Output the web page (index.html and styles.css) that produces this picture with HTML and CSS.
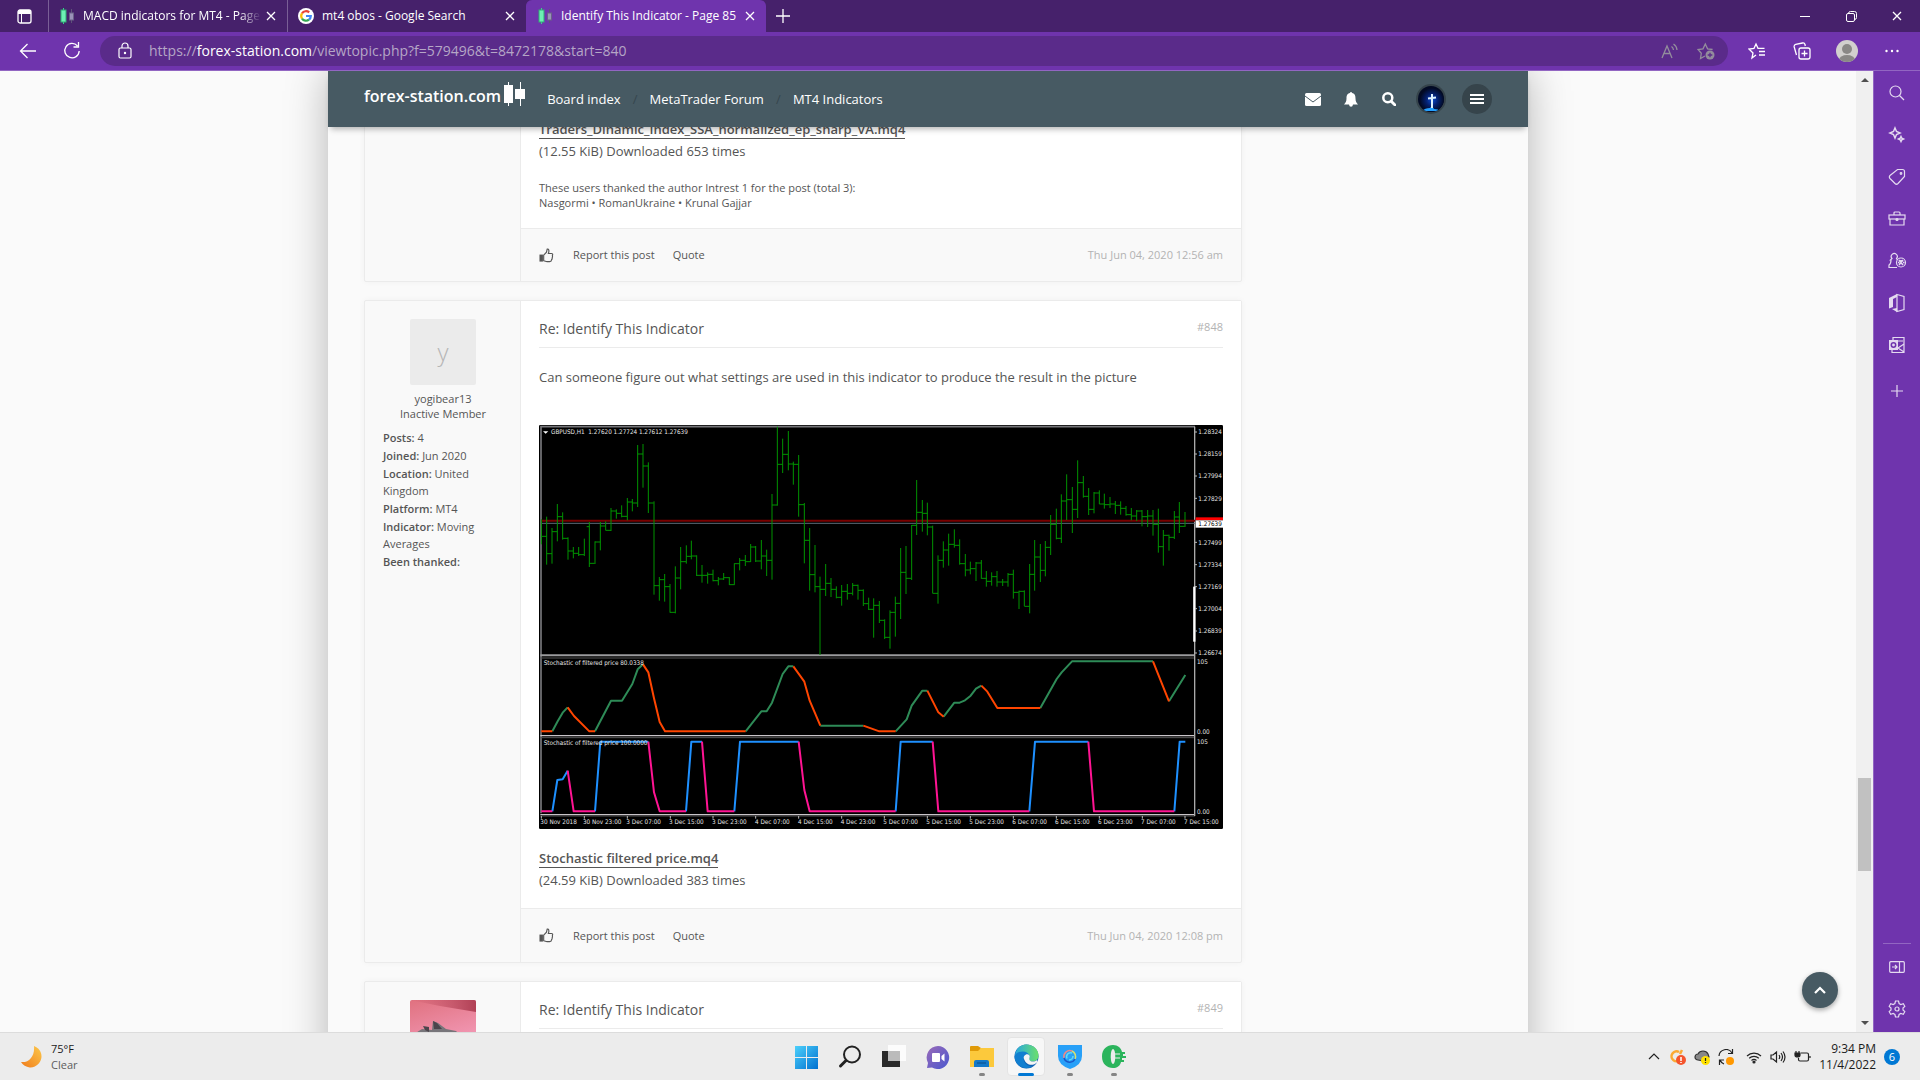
FILE: index.html
```html
<!DOCTYPE html>
<html lang="en">
<head>
<meta charset="utf-8">
<title>Identify This Indicator - Page 85</title>
<link rel="stylesheet" href="styles.css">
</head>
<body>
<svg class="defs" aria-hidden="true">
  <defs>
    <symbol id="candles" viewBox="0 0 16 16">
      <path d="M4.500 0v16" stroke="#39d98a"/><rect x="2" y="2" width="5" height="12" fill="#6df0b4" stroke="#2fae74"/>
      <path d="M12.500 1v14" stroke="#5d5478"/><rect x="10.500" y="5" width="4" height="7" fill="#9a92b8" stroke="#6a6088"/>
    </symbol>
    <symbol id="x" viewBox="0 0 10 10"><path d="M1 1l8 8M9 1l-8 8"/></symbol>
    <symbol id="thumb" viewBox="0 0 16 16">
      <path d="M5 7.500L8 4.500 8.700 1.200c1.600-.5 2.500 1.300 1.300 4.600h3.200c1.300 0 1.700 1 1.200 2l-.2.600c.4.900.3 1.500-.2 2.100.2.900 0 1.500-.6 2 0 1.300-.6 2-2 2H8.500c-1.200 0-2-.8-3.500-.9z" fill="none" stroke="currentColor" stroke-width="1.200"/>
      <path d="M.5 7h3.700v7.500H.5z" fill="currentColor"/>
    </symbol>
  </defs>
</svg>

<header class="tabbar">
  <button class="tab-menu" aria-label="Tab actions"><svg width="15" height="15" viewBox="0 0 15 15"><rect x="1" y="1" width="13" height="13" rx="2" fill="none" stroke="#fff" stroke-width="1.300"/><path d="M1 3a2 2 0 0 1 2-2h9a2 2 0 0 1 2 2v2H1z" fill="#fff"/><path d="M4.500 5v9" stroke="#fff"/></svg></button>
  <div class="tab"><svg class="fav" width="16" height="16"><use href="#candles"/></svg><span class="tab-title fade">MACD indicators for MT4 - Page</span><button class="tab-x" aria-label="Close tab"><svg width="10" height="10"><use href="#x"/></svg></button></div>
  <div class="tab"><svg class="fav" width="16" height="16" viewBox="0 0 16 16"><circle cx="8" cy="8" r="8" fill="#fff"/><g fill="none" stroke-width="2.200"><path d="M11.200 4.400A4.800 4.800 0 0 0 4 5.400" stroke="#ea4335"/><path d="M4 5.400a4.800 4.800 0 0 0 0 5.200" stroke="#fbbc05"/><path d="M4 10.600a4.800 4.800 0 0 0 7 1.100" stroke="#34a853"/><path d="M11 11.700A4.800 4.800 0 0 0 12.800 8H8" stroke="#4285f4"/></g></svg><span class="tab-title">mt4 obos - Google Search</span><button class="tab-x" aria-label="Close tab"><svg width="10" height="10"><use href="#x"/></svg></button></div>
  <div class="tab active"><svg class="fav" width="16" height="16"><use href="#candles"/></svg><span class="tab-title">Identify This Indicator - Page 85</span><button class="tab-x" aria-label="Close tab"><svg width="10" height="10"><use href="#x"/></svg></button></div>
  <button class="new-tab" aria-label="New tab"><svg width="14" height="14" viewBox="0 0 14 14"><path d="M7 0v14M0 7h14" stroke="#fff" stroke-width="1.300"/></svg></button>
  <div class="win">
    <button aria-label="Minimize"><svg width="10" height="10"><path d="M0 5.500h10" stroke="#fff"/></svg></button>
    <button aria-label="Restore"><svg width="11" height="11" viewBox="0 0 11 11" fill="none" stroke="#fff"><rect x=".5" y="2.500" width="8" height="8" rx="1.500"/><path d="M2.500 2.500q0-2 2-2h4q2 0 2 2v4q0 2-2 2"/></svg></button>
    <button aria-label="Close"><svg width="10" height="10" class="cl"><use href="#x"/></svg></button>
  </div>
</header>

<nav class="toolbar">
  <button class="nav-btn" aria-label="Back"><svg width="18" height="16" viewBox="0 0 18 16"><path d="M17 8H1.500M8.500 1L1.500 8l7 7"/></svg></button>
  <button class="nav-btn" aria-label="Refresh"><svg width="18" height="18" viewBox="0 0 18 18"><path d="M14.500 4A7.200 7.200 0 1 0 16.200 9M15.500 0v5h-5"/></svg></button>
  <div class="address">
    <svg width="14" height="18" viewBox="0 0 14 18" fill="none" stroke="#fff" stroke-width="1.200"><rect x="1" y="6" width="12" height="10" rx="1.500"/><path d="M4 6V4a3 3 0 0 1 6 0v2"/><circle cx="7" cy="11" r=".6" fill="#fff"/></svg>
    <div class="url" role="textbox" aria-label="Address" contenteditable="true" spellcheck="false">https://<b>forex-station.com</b>/viewtopic.php?f=579496&amp;t=8472178&amp;start=840</div>
    <button class="addr-btn" aria-label="Read aloud"><svg width="18" height="16" viewBox="0 0 18 16"><path d="M1 15L6 3l5 12M3 10.500h6M10.500 3.500a5 5 0 0 1 2 3.500M12.500 1a8 8 0 0 1 3.500 6"/></svg></button>
    <button class="addr-btn" aria-label="Add to favorites"><svg width="18" height="18" viewBox="0 0 18 18"><path d="M8 14l-4.500 2.500.8-5.200L1 7.500l5-.7L8.300 2l2.300 4.800 5 .7"/><circle cx="13" cy="13" r="4.500" fill="#938d9c" stroke="none"/><path d="M13 10.700v4.600M10.700 13h4.600" stroke="#5a2b8a"/></svg></button>
  </div>
  <button class="act-btn" aria-label="Favorites"><svg width="18" height="18" viewBox="0 0 18 18"><path d="M8 13l-4 3 1-5-4-4 5-.7L8 2l2 4.300h6.500M11 9.500h6M11 13h6"/></svg></button>
  <button class="act-btn" aria-label="Collections"><svg width="18" height="18" viewBox="0 0 18 18"><rect x="6" y="6" width="11" height="11" rx="2"/><path d="M11.500 8.500v6M8.500 11.500h6M3.500 13L1.200 5Q.8 3 2.700 2.400L9.500 1q2-.4 2.500 1.500L12.300 4"/></svg></button>
  <button class="act-btn" aria-label="Profile"><svg width="22" height="22" viewBox="0 0 22 22"><clipPath id="pc"><circle cx="11" cy="11" r="11"/></clipPath><g clip-path="url(#pc)" stroke="none"><path d="M0 0h22v22H0z" fill="#d2d0ce"/><circle cx="11" cy="9" r="5" fill="#8a8886"/><ellipse cx="11" cy="20" rx="8" ry="5" fill="#8a8886"/></g></svg></button>
  <button class="act-btn" aria-label="Settings and more"><svg width="14" height="4" viewBox="0 0 14 4"><g fill="#fff" stroke="none"><circle cx="1.500" cy="2" r="1.200"/><circle cx="7" cy="2" r="1.200"/><circle cx="12.500" cy="2" r="1.200"/></g></svg></button>
</nav>

<div class="workspace">
  <main class="viewport">
    <div class="board">
      <header class="site-head">
        <a class="logo" href="#">forex-station.com<svg width="22" height="24" viewBox="0 0 22 24"><path d="M5.500 0v24M17.500 0v24" stroke="#fff"/><path d="M1 3h9v18H1zM12 7h10v10H12z" fill="#fff"/></svg></a>
        <nav class="crumbs"><a href="#">Board index</a><i>/</i><a href="#">MetaTrader Forum</a><i>/</i><a href="#">MT4 Indicators</a></nav>
        <div class="head-tools">
          <button aria-label="Messages"><svg width="16" height="13" viewBox="0 0 16 13"><path d="M0 1.500Q0 0 1.500 0h13Q16 0 16 1.500v10q0 1.500-1.500 1.500h-13Q0 13 0 11.500z" fill="#fff"/><path d="M0 3l8 6 8-6" fill="none" stroke="#475a63"/></svg></button>
          <button aria-label="Notifications"><svg width="14" height="15" viewBox="0 0 14 15"><path d="M7 0q1 0 1 1.100C11 1.800 11.500 4 11.500 6.500c0 3 1 4.500 2.500 6H9q-.3 2.300-2 2.300T5 12.500H0c1.500-1.500 2.500-3 2.500-6C2.500 4 3 1.800 6 1.100Q6 0 7 0z" fill="#fff"/></svg></button>
          <button aria-label="Search"><svg width="14" height="14" viewBox="0 0 14 14" fill="none" stroke="#fff"><circle cx="5.800" cy="5.800" r="4.500" stroke-width="2.500"/><path d="M9.200 9.200L13 13" stroke-width="2.800" stroke-linecap="round"/></svg></button>
          <button class="round" aria-label="Your profile"><svg width="26" height="26" viewBox="0 0 26 26"><defs><radialGradient id="cg"><stop offset="0" stop-color="#0a4bd0"/><stop offset=".5" stop-color="#04206e"/><stop offset="1" stop-color="#020a24"/></radialGradient><clipPath id="cc"><circle cx="13" cy="13" r="13"/></clipPath></defs><g clip-path="url(#cc)"><path d="M0 0h26v26H0z" fill="#020a24"/><circle cx="14" cy="14" r="12" fill="url(#cg)"/><path d="M4 25q3-3 8-3l2-2 2 3q5 0 5 2z" fill="#24a0ff"/><path d="M14 8v14M10 12.500l8-1" stroke="#dff2ff" stroke-width="2"/></g></svg></button>
          <button class="round" aria-label="Menu"><svg width="14" height="10" viewBox="0 0 14 10"><path d="M0 1h14M0 5h14M0 9h14" stroke="#fff" stroke-width="2"/></svg></button>
        </div>
      </header>

      <div class="columns">
        <div class="posts">
          <article class="post first">
            <aside class="author"></aside>
            <div class="post-main">
              <div class="post-body">
                <p class="attach"><a href="#">Traders_Dinamic_Index_SSA_normalized_ep_sharp_VA.mq4</a><br>(12.55 KiB) Downloaded 653 times</p>
                <p class="thanks">These users thanked the author Intrest 1 for the post (total 3):<br>Nasgormi • RomanUkraine • Krunal Gajjar</p>
              </div>
              <footer class="post-foot"><button aria-label="Like"><svg width="15" height="15"><use href="#thumb"/></svg></button><a href="#">Report this post</a><a href="#">Quote</a><time>Thu Jun 04, 2020 12:56 am</time></footer>
            </div>
          </article>

          <article class="post">
            <aside class="author">
              <div class="avatar">y</div>
              <div class="who">yogibear13<br>Inactive Member</div>
              <dl><div><dt>Posts:</dt> <dd>4</dd></div><div><dt>Joined:</dt> <dd>Jun 2020</dd></div><div><dt>Location:</dt> <dd>United Kingdom</dd></div><div><dt>Platform:</dt> <dd>MT4</dd></div><div><dt>Indicator:</dt> <dd>Moving Averages</dd></div><div><dt>Been thanked:</dt></div></dl>
            </aside>
            <div class="post-main">
              <div class="post-body">
                <div class="post-title"><h3>Re: Identify This Indicator</h3><a href="#">#848</a></div>
                <p class="text">Can someone figure out what settings are used in this indicator to produce the result in the picture</p>
                <svg class="chart" viewBox="0 0 2052 1212" role="img" aria-label="GBPUSD H1 price chart">
                  <rect width="2052" height="1212" rx="4" fill="#000"/>
                  <g fill="none" transform="translate(-12 -15)">
                    <path d="M18 1180V20H1980" stroke="#77777b" stroke-width="5"/>
                    <path d="M16 706H1980" stroke="#9b9b9d" stroke-width="6"/>
                    <path d="M16 714H1980" stroke="#555" stroke-width="3"/>
                    <path d="M16 947H1980M16 1184H1980" stroke="#c8c4c8" stroke-width="4"/>
                    <path d="M16 953H1980M16 1188H1980" stroke="#555" stroke-width="3"/>
                    <path d="M1979 20V1188" stroke="#aaa" stroke-width="4"/>
                    <path d="M1978 500V665" stroke="#fff" stroke-width="7"/>
                    <path d="M20 302H1980" stroke="#780000" stroke-width="6"/>
                    <path d="M20 310H1980" stroke="#5c6a78" stroke-width="3"/>
                    <path d="M1980 36h6M1980 102h6M1980 168h6M1980 235h6M1980 367h6M1980 434h6M1980 500h6M1980 566h6M1980 633h6M1980 699h6M19 1188v8M148 1188v8M277 1188v8M406 1188v8M534 1188v8M662 1188v8M791 1188v8M920 1188v8M1048 1188v8M1177 1188v8M1306 1188v8M1435 1188v8M1564 1188v8M1693 1188v8M1822 1188v8M1950 1188v8" stroke="#bbb" stroke-width="3"/>
                  </g>
                  <g fill="none" stroke="#009400" stroke-width="3">
                    <path transform="translate(-12 -15)" d="M19 298V373M19 349h16M35 290V434M35 401h16M51 324V431M51 335h16M67 252V364M67 290h16M83 277V359M83 355h16M99 352V419M99 393h16M115 381V415M115 400h16M131 381V408M131 404h16M148 356V408M155 320h8M163 306V441M163 430h16M180 364V432M180 366h16M196 306V391M196 318h16M212 304V331M212 331h16M228 264V333M228 273h16M244 268V296M244 280h16M260 256V292M260 289h16M277 234V301M277 246h16M292 237V274M292 249h16M308 75V261M308 102h16M324 72V203M324 138h16M340 127V279M340 249h16M357 244V524M357 497h16M373 471V542M373 479h16M389 462V545M389 500h16M405 492V578M405 577h16M421 439V580M421 474h16M437 381V508M437 425h16M454 376V431M454 409h16M469 362V418M469 408h16M485 406V468M485 466h16M501 435V488M501 466h16M518 457V491M518 463h16M534 449V484M534 482h16M550 471V496M550 477h16M566 459V480M566 473h16M583 471V495M583 494h16M598 430V494M598 431h16M614 414V451M614 421h16M631 405V438M631 425h16M647 372V426M647 381h16M662 378V426M662 423h16M679 360V448M679 408h16M695 389V468M695 421h16M711 222V479M711 255h16M727 20V257M727 133h16M743 56V159M743 103h16M760 33V151M760 132h16M775 125V194M775 133h16M791 105V290M791 254h16M808 249V430M808 361h16M824 324V512M824 464h16M840 375V517M840 500h16M855 470V705M855 508h16M872 432V528M872 490h16M888 474V531M888 508h16M904 499V535M904 532h16M920 495V557M920 514h16M937 492V539M937 520h16M953 489V526M953 496h16M969 494V539M969 511h16M985 508V558M985 551h16M1001 533V570M1001 568h16M1016 535V653M1016 556h16M1033 543V609M1033 601h16"/>
                    <path transform="translate(1023 -15)" d="M14 598V657M14 652h16M30 571V686M30 577h16M46 530V650M46 550h16M62 384V597M62 457h16M78 378V522M78 475h16M95 315V480M95 316h16M110 180V345M110 277h16M127 240V335M127 280h16M142 248V346M142 321h16M158 317V520M158 520h16M174 406V551M174 421h16M190 364V443M190 390h16M206 341V437M206 373h16M223 328V383M223 376h16M239 358V434M239 431h16M256 402V469M256 450h16M271 425V463M271 446h16M288 426V483M288 429h16M304 420V476M304 475h16M319 453V500M319 484h16M335 457V497M335 470h16M351 453V500M351 486h16M368 477V498M368 486h16M384 459V500M384 463h16M400 449V536M400 517h16M417 512V567M417 514h16M433 511V558M433 559h16M449 432V580M449 463h16M464 360V512M464 411h16M481 372V486M481 451h16M496 363V469M496 382h16M512 285V405M512 313h16M529 266V358M529 355h16M544 223V369M544 243h16M560 163V300M560 239h16M577 201V339M577 268h16M593 121V294M593 188h16M610 168V233M610 229h16M626 204V285M626 268h16M642 216V280M642 219h16M658 211V252M658 252h16M673 221V266M673 254h16M690 231V264M690 252h16M706 243V282M706 256h16M722 244V284M722 265h16M738 258V287M738 284h16M754 264V301M754 288h16M770 270V303M770 273h16M786 270V319M786 290h16M803 270V321M803 288h16M819 270V347M819 313h16M835 266V398M835 380h16M850 330V437M850 346h16M867 344V392M867 352h16M883 273V357M883 291h16M898 246V339M898 319h16M915 276V321"/>
                  </g>
                  <g fill="none" stroke-width="6" stroke-linejoin="round">
                    <g stroke="#2e8b57"><path transform="translate(-12 675)" d="M52 244L68 214 83 188 98 172M180 244L228 152H261L292 102 308 58 324 43M632 244L679 184H695L711 158 743 72 760 49H775M856 227H985"/><path transform="translate(1023 675)" d="M47 244L80 208 95 167 127 122H142M191 200L223 158H239L255 151 272 137 288 116 304 107M481 174L530 87 545 67 576 34H819M867 154L916 75"/></g>
                    <g stroke="#ff4500"><path transform="translate(-12 675)" d="M19 244H52M98 172L117 198 163 244H180M324 43L340 67 357 145 374 216 390 244H632M775 49L808 95 824 152 856 227M985 227L1033 244H1082"/><path transform="translate(1023 675)" d="M142 122L175 187 191 200M304 107L322 125 352 174H481M819 34L867 154"/></g>
                    <g stroke="#1e90ff"><path transform="translate(-12 675)" d="M52 484L67 390 83 388 98 362M180 484L196 275H340M453 484L469 275H501M598 484L615 275H791"/><path transform="translate(1023 675)" d="M47 484L62 275H158M448 484L465 275H625M883 484L899 275H916"/></g>
                    <g stroke="#ff1493"><path transform="translate(-12 675)" d="M19 484H52M98 362L116 484H180M340 275L357 427 374 484H453M501 275L518 484H598M791 275L808 420 824 484H1082"/><path transform="translate(1023 675)" d="M158 275L175 484H448M625 275L642 484H883"/></g>
                  </g>
                  <path d="M12 19h16l-8 7z" fill="#fff"/>
                  <g class="chart-text">
                    <text x="36" y="28" xml:space="preserve">GBPUSD,H1  1.27620 1.27724 1.27612 1.27639</text>
                    <text x="14" y="719">Stochastic of filtered price 80.0338</text>
                    <text x="14" y="960">Stochastic of filtered price 100.0000</text>
                    <text x="1978" y="28">1.28324</text><text x="1978" y="94">1.28159</text><text x="1978" y="160">1.27994</text><text x="1978" y="227">1.27829</text><text x="1978" y="359">1.27499</text><text x="1978" y="426">1.27334</text><text x="1978" y="492">1.27169</text><text x="1978" y="558">1.27004</text><text x="1978" y="625">1.26839</text><text x="1978" y="691">1.26674</text>
                    <text x="1974" y="716">105</text><text x="1974" y="926">0.00</text><text x="1974" y="957">105</text><text x="1974" y="1166">0.00</text>
                    <text x="4" y="1197">30 Nov 2018</text><text x="132" y="1197">30 Nov 23:00</text><text x="262" y="1197">3 Dec 07:00</text><text x="390" y="1197">3 Dec 15:00</text><text x="519" y="1197">3 Dec 23:00</text><text x="648" y="1197">4 Dec 07:00</text><text x="777" y="1197">4 Dec 15:00</text><text x="905" y="1197">4 Dec 23:00</text><text x="1033" y="1197">5 Dec 07:00</text><text x="1162" y="1197">5 Dec 15:00</text><text x="1291" y="1197">5 Dec 23:00</text><text x="1420" y="1197">6 Dec 07:00</text><text x="1548" y="1197">6 Dec 15:00</text><text x="1677" y="1197">6 Dec 23:00</text><text x="1806" y="1197">7 Dec 07:00</text><text x="1935" y="1197">7 Dec 15:00</text>
                  </g>
                  <path d="M1970 277h82v9h-82z" fill="#f00"/><path d="M1970 286h82v22h-82z" fill="#fff"/>
                  <text class="chart-price" x="1978" y="304">1.27639</text>
                </svg>
                <p class="attach"><a href="#">Stochastic filtered price.mq4</a><br>(24.59 KiB) Downloaded 383 times</p>
              </div>
              <footer class="post-foot"><button aria-label="Like"><svg width="15" height="15"><use href="#thumb"/></svg></button><a href="#">Report this post</a><a href="#">Quote</a><time>Thu Jun 04, 2020 12:08 pm</time></footer>
            </div>
          </article>

          <article class="post">
            <aside class="author">
              <svg class="avatar" viewBox="0 0 66 66"><defs><linearGradient id="ag" x1="0" y1="0" x2=".3" y2="1"><stop offset="0" stop-color="#e0717f"/><stop offset="1" stop-color="#f7a3c4"/></linearGradient><linearGradient id="ah"><stop offset="0" stop-color="#c25062" stop-opacity="0"/><stop offset="1" stop-color="#b04055"/></linearGradient></defs><path d="M0 0h66v66H0z" fill="url(#ag)"/><path d="M0 0h66v12L30 6z" fill="url(#ah)"/><path d="M4 66V34l8-5 10 1 1-9 5 2 8 6 10 2 5 5v30z" fill="#77757a"/><path d="M13 26l6 1v5l-4-2zM23 21l4 2 5 6h-8z" fill="#4c454c"/></svg>
            </aside>
            <div class="post-main">
              <div class="post-body">
                <div class="post-title"><h3>Re: Identify This Indicator</h3><a href="#">#849</a></div>
              </div>
            </div>
          </article>
        </div>
      </div>
    </div>
    <button class="to-top" aria-label="Back to top"><svg width="12" height="8" viewBox="0 0 12 8"><path d="M1 7l5-5 5 5" fill="none" stroke="#fff" stroke-width="2.200"/></svg></button>
  </main>
  <div class="scrollbar" aria-hidden="true"><svg width="8" height="4" viewBox="0 0 8 4"><path d="M0 4l4-4 4 4z" fill="#505050"/></svg><div class="track"><div class="thumb"></div></div><svg width="8" height="4" viewBox="0 0 8 4"><path d="M0 0l4 4 4-4z" fill="#505050"/></svg></div>
  <aside class="sidebar">
    <button aria-label="Search"><svg width="18" height="18" viewBox="0 0 18 18"><circle cx="7.500" cy="7.500" r="5.500"/><path d="M11.500 11.500L16 16"/></svg></button>
    <button aria-label="Discover"><svg width="18" height="18" viewBox="0 0 18 18"><path d="M7 2l1.500 3.500L12 7 8.500 8.500 7 12 5.500 8.500 2 7l3.500-1.500zM13 10.500l.8 1.700 1.700.8-1.700.8-.8 1.700-.8-1.700-1.700-.8 1.700-.8z" stroke-width="1.500"/></svg></button>
    <button aria-label="Shopping"><svg width="18" height="18" viewBox="0 0 18 18"><path d="M9.500 1.500h5q2 0 2 2v5L10 15.500q-1.500 1.500-3 0L2 10.500q-1.300-1.500 0-3z"/><circle cx="13" cy="5.500" r=".8"/></svg></button>
    <button aria-label="Tools"><svg width="18" height="18" viewBox="0 0 18 18"><rect x="1" y="5" width="16" height="4"/><path d="M6 5V3q0-1 1-1h4q1 0 1 1v2M2 9v6h14V9"/><circle cx="9" cy="9.500" r="1" fill="#e4daf0"/></svg></button>
    <button aria-label="Games"><svg width="20" height="18" viewBox="0 0 20 18"><path d="M10 15.500H2v-2.500q2-1 2-5H3.500L5 6.500a3 3 0 1 1 4.500 0L10.500 8"/><circle cx="14" cy="10.500" r="4.500"/><path d="M12 8l4 5M16 8l-4 5M14 8v1M11 10.500h1.500M16 10.500h1.500" stroke-width="1.500"/></svg></button>
    <button aria-label="Office"><svg width="18" height="20" viewBox="0 0 18 20"><path d="M1 5l8-4v3L5 6v8l-4 1.500zM4 16l5-1v4z" fill="#e4daf0" stroke="none"/><path d="M9 1.500l7 2v13l-7 2z"/></svg></button>
    <button aria-label="Outlook"><svg width="18" height="18" viewBox="0 0 18 18"><path d="M5 4V1.500h11V16.500H4V14M16 8l-6 4 6 4M6 5h9"/><path d="M1 4h9v10H1z" fill="#e4daf0" stroke="none"/><circle cx="5.500" cy="9" r="2.200" stroke="#6f34ad" stroke-width="1.500"/></svg></button>
    <button class="add" aria-label="Customize"><svg width="12" height="12" viewBox="0 0 12 12"><path d="M6 0v12M0 6h12"/></svg></button>
    <hr>
    <button aria-label="Hide sidebar"><svg width="16" height="12" viewBox="0 0 16 12"><rect x=".7" y=".7" width="14.600" height="10.600" rx="1"/><path d="M10.500 1v10M3 6h5M6 4l2 2-2 2"/></svg></button>
    <button aria-label="Settings"><svg width="18" height="18" viewBox="0 0 18 18"><circle cx="9" cy="9" r="2"/><path d="M7.500 1h3l.6 2.500 1.700 1 2.500-.8 1.500 2.600L15 8.100v1.800l1.800 1.800-1.500 2.600-2.500-.8-1.700 1-.6 2.500h-3l-.6-2.500-1.700-1-2.500.8-1.500-2.600L3 9.900V8.100L1.200 6.300l1.500-2.600 2.500.8 1.700-1z"/></svg></button>
  </aside>
</div>

<footer class="taskbar">
  <button class="weather"><svg width="24" height="24" viewBox="0 0 24 24"><defs><linearGradient id="mg" x1="0" y1="1" x2="1" y2="0"><stop offset="0" stop-color="#f07c1c"/><stop offset="1" stop-color="#fcc84a"/></linearGradient></defs><path d="M14 1a11 11 0 1 1-13 16c8 1 14-6 13-16z" fill="url(#mg)"/></svg><span>75°F<br><em>Clear</em></span></button>
  <div class="apps">
    <button aria-label="Start"><svg width="24" height="24" viewBox="0 0 24 24"><defs><linearGradient id="wg" x1="0" y1="0" x2="1" y2="1"><stop offset="0" stop-color="#4cd0fb"/><stop offset="1" stop-color="#0070d0"/></linearGradient></defs><path d="M1 1h11v11H1zM13 1h11v11H13zM1 13h11v11H1zM13 13h11v11H13z" fill="url(#wg)"/></svg></button>
    <button aria-label="Search"><svg width="24" height="24" viewBox="0 0 24 24" fill="none" stroke="#222"><circle cx="14" cy="9.500" r="8" stroke-width="2"/><path d="M8 15.500L2.500 21" stroke-width="3" stroke-linecap="round"/></svg></button>
    <button aria-label="Task view"><svg width="24" height="24" viewBox="0 0 24 24"><path d="M0 6h18v16H0z" fill="#2a2a2a"/><path d="M6 0h18v16H6z" fill="#fff" opacity=".85"/><path d="M6 6h12v10H6z" fill="#bbb"/></svg></button>
    <button aria-label="Chat"><svg width="24" height="24" viewBox="0 0 24 24"><defs><linearGradient id="tg" x1="0" y1="0" x2="1" y2="1"><stop offset="0" stop-color="#9a6ab8"/><stop offset="1" stop-color="#4a58cf"/></linearGradient></defs><path d="M12 1a11.500 11.500 0 1 1-6 21.500L1 23l1-5A11.500 11.500 0 0 1 12 1z" fill="url(#tg)"/><rect x="6" y="8" width="8" height="9" rx="1" fill="#fff"/><path d="M15.500 11l3-2.500v8l-3-2.500z" fill="#fff"/></svg></button>
    <button aria-label="File Explorer" class="run"><svg width="24" height="24" viewBox="0 0 24 24"><path d="M0 2q0-1 1-1h7l3 2-2 4H0z" fill="#e09a08"/><path d="M0 6h8l3-3h13v19H0z" fill="#fcc93c"/><path d="M4 22v-5q0-2 2-2h11q2 0 2 2v5z" fill="#1478c8"/><path d="M7 18h9" stroke="#0a4c88"/></svg></button>
    <button aria-label="Edge" class="run current"><svg width="25" height="25" viewBox="0 0 25 25"><defs><linearGradient id="eg"><stop offset="0" stop-color="#28a8e0"/><stop offset="1" stop-color="#6be06a"/></linearGradient></defs><circle cx="12.500" cy="12.500" r="12" fill="#1162b4"/><path d="M1 11C2 4 7 .5 12.500.5c7 0 12 5 12 11 0 4-3 6-6 6-3.500 0-4.500-1.500-3-3.500 1-2-1-5-4.500-5C7 9 2.500 11 1 15z" fill="url(#eg)"/><path d="M.5 13C1 9 5 7.500 9 7.500c3 0 5 1.500 6 3.500-4-2-7 3-4.500 7 1.500 3 5 4.500 8 4.500A12 12 0 0 1 .5 13z" fill="#127fd0"/><path d="M10 15c-1.500-3 3-6.500 5.500-3.500 1 2-1 3 0 4.500 1.500 2 5 2 7.500 0l.5 2c-5 5-11.500 3-13.500-3z" fill="#f5f5f5"/></svg></button>
    <button aria-label="VPN" class="run"><svg width="24" height="24" viewBox="0 0 24 24"><path d="M0 0h24v11q0 9-12 13Q0 20 0 11z" fill="#28a0f8"/><g fill="none" stroke-width="1.500"><path d="M6 13a6 6 0 0 1 8-7" stroke="#e88"/><path d="M14 6a6 6 0 0 1 3 8" stroke="#d8e070"/><path d="M17 14a6 6 0 0 1-11-1" stroke="#1b57c8"/><path d="M9 13.500a4 4 0 0 1 5-5.500M15 11a4 4 0 0 1-4 4" stroke="#60dcf8"/></g></svg></button>
    <button aria-label="Trading app" class="run"><svg width="24" height="24" viewBox="0 0 24 24"><path d="M11 0c5 0 8 3 9 7h3v2h-2v2h3v2h-4v2h2v2h-3c-1 4-4 6-8 6-6 0-11-4-11-11.500S5 0 11 0z" fill="#2bb45c"/><path d="M11 4c3 0 3 15 0 15S8 4 11 4z" fill="#ececec"/><path d="M12 9h6M12 13h6" stroke="#ececec" stroke-width="1"/></svg></button>
  </div>
  <div class="tray">
    <button aria-label="Hidden icons"><svg width="12" height="7" viewBox="0 0 12 7"><path d="M1 6l5-5 5 5"/></svg></button>
    <button aria-label="Antivirus"><svg width="16" height="16" viewBox="0 0 16 16"><path d="M9 3a5 5 0 1 0 1 8M12 1l-2 4" stroke="#fba934" stroke-width="2.500"/><circle cx="11" cy="11" r="5" fill="#f4552d" stroke="none"/><path d="M11 8v4M11 13v1" stroke="#fff" stroke-width="1.500"/></svg></button>
    <button aria-label="Cloud sync"><svg width="16" height="16" viewBox="0 0 16 16"><path d="M4 11a3 3 0 0 1 0-6c2-4 8-4 10 0l1 3-5 4z" fill="#888" stroke="#333"/><circle cx="11.500" cy="11.500" r="4.500" fill="#ffe100" stroke="none"/><path d="M11.500 9v3M11.500 13v1" stroke="#222"/></svg></button>
    <button aria-label="Updates"><svg width="16" height="16" viewBox="0 0 16 16"><path d="M1 7a7 7 0 0 1 13-3M14.500 0v4.500H10M6 15a7 7 0 0 1-4-4M1.500 16v-5H6"/><circle cx="12" cy="12" r="4" fill="#ff9800" stroke="none"/></svg></button>
    <button class="wide" aria-label="Wi-Fi"><svg width="16" height="14" viewBox="0 0 16 14"><path d="M1 6a10 10 0 0 1 14 0M3.200 8.300a7 7 0 0 1 9.600 0M5.500 10.500a3.800 3.800 0 0 1 5 0"/><circle cx="8" cy="12" r="1" fill="#222"/></svg></button>
    <button aria-label="Volume"><svg width="16" height="14" viewBox="0 0 16 14"><path d="M1 5v4h2l3.500 3V2L3 5zM9 5q1.500 2 0 4M11 3q3 4 0 8M13 1.500q4 5.500 0 11"/></svg></button>
    <button aria-label="Battery"><svg width="17" height="14" viewBox="0 0 17 14"><path d="M7 3h6q1.500 0 1.500 1.500v5q0 1.500-1.500 1.500H6q-1.500 0-1.500-1.500V8M16 6v2"/><path d="M1 3h5v2q0 2-2.500 2T1 5zM2 1v2M5 1v2" fill="#222"/></svg></button>
    <time>9:34 PM<br>11/4/2022</time>
    <span class="badge">6</span>
  </div>
</footer>
</body>
</html>
```
FILE: styles.css
```css
* { box-sizing: border-box; }
body {
  margin: 0;
  height: 100vh;
  display: flex;
  flex-direction: column;
  overflow: hidden;
  font: 13px/22px "Open Sans", "Noto Sans", sans-serif;
  color: #555;
}
button { border: 0; padding: 0; background: none; font: inherit; color: inherit; display: flex; align-items: center; justify-content: center; }
a { color: inherit; text-decoration: none; }
p, h3, dl, dd { margin: 0; }
svg { display: block; flex: none; }
.defs { position: absolute; width: 0; height: 0; }

/* Browser tabs */
.tabbar { flex: none; height: 32px; display: flex; background: #46216b; color: #fff; font-size: 12px; line-height: 16px; }
.tab-menu { width: 48px; }
.tab { width: 239px; display: flex; align-items: center; padding: 0 6px 0 10px; border-left: 1px solid #7a5f96; }
.tab.active { width: 240px; background: #6f34ad; border-left-color: #6f34ad; border-radius: 6px 6px 0 0; }
.fav { margin-right: 8px; }
.tab-title { flex: 1; white-space: nowrap; }
.fade { -webkit-mask-image: linear-gradient(90deg, #000 88%, transparent); mask-image: linear-gradient(90deg, #000 88%, transparent); }
.tab-x { width: 20px; height: 24px; }
.tab-x svg, .cl { stroke: #fff; stroke-width: 1.3; }
.new-tab { width: 34px; }
.win { margin-left: auto; display: flex; }
.win button { width: 46px; }

/* Browser toolbar */
.toolbar { flex: none; height: 39px; display: flex; align-items: center; background: #6f34ad; border-bottom: 1px solid #9266c2; padding: 0 6px; }
.nav-btn { width: 44px; height: 32px; }
.toolbar button svg { fill: none; stroke: #fff; stroke-width: 1.3; }
.address { flex: 1; height: 30px; margin: 0 6px; padding: 0 12px 0 18px; display: flex; align-items: center; background: #5a2b8a; border-radius: 15px; }
.url { flex: 1; margin-left: 17px; color: #b5a6c6; font-size: 14px; line-height: 20px; white-space: nowrap; outline: 0; }
.url b { color: #fff; font-weight: 400; }
.addr-btn { width: 37px; height: 28px; }
.toolbar .addr-btn svg { stroke: #938d9c; }
.address .addr-btn:last-child { width: 20px; margin-left: 8px; }
.act-btn { width: 45px; height: 32px; }

/* Page area */
.workspace { flex: 1; min-height: 0; display: flex; }
.viewport { flex: 1; position: relative; overflow: hidden; background: #fafafa; }
.board { position: relative; max-width: 1200px; min-height: 100%; margin: 0 auto; background: #fafafa; box-shadow: 0 0 40px rgba(0, 0, 0, .28); }
.site-head { position: absolute; top: 0; left: 0; right: 0; height: 56px; z-index: 2; display: flex; align-items: center; padding: 0 36px; background: #475a63; color: #fff; box-shadow: 0 5px 6px -3px rgba(0, 0, 0, .3); }
.logo { display: flex; gap: 2px; font-size: 16px; font-weight: 600; line-height: 28px; padding-bottom: 6px; }
.crumbs { display: flex; margin-left: 22px; font-weight: 500; }
.crumbs i { width: 29px; text-align: center; color: #36464e; font-style: normal; }
.head-tools { margin-left: auto; display: flex; align-items: center; gap: 16px; }
.head-tools button { width: 22px; height: 30px; }
.head-tools .round { width: 30px; border-radius: 50%; background: #36444b; }

.columns { display: grid; grid-template-columns: 1fr 250px; padding: 0 36px; }
.posts { display: flex; flex-direction: column; gap: 18px; }
.post { display: flex; background: #f9f9f9; border: 1px solid #ebebeb; border-radius: 2px; box-shadow: 0 0 6px rgba(0, 0, 0, .04); }
.author { width: 155px; flex: none; padding: 18px 17px 18px 18px; font-size: 11px; line-height: 15px; }
.avatar { width: 66px; height: 66px; margin: 0 auto 6px; border-radius: 2px; background: #ebebeb; color: #b5b5b5; font-size: 24px; font-weight: 300; line-height: 66px; text-align: center; }
.who { text-align: center; margin-bottom: 8px; }
.author dl { display: grid; gap: 1px; line-height: 17px; }
dt, dd { display: inline; }
dt { font-weight: 600; }
.post-main { flex: 1; border-left: 1px solid #ebebeb; }
.post-body { padding: 18px 18px 17px; background: #fff; }
.first .post-body { padding: 46px 18px 18px; }
.post-title { display: flex; justify-content: space-between; height: 29px; border-bottom: 1px solid #ebebeb; margin-bottom: 18px; }
.post-title h3 { font-size: 14px; font-weight: 400; line-height: 20px; }
.post-title a { font-size: 11px; line-height: 16px; color: #b3b3b3; }
.text { margin-bottom: 37px; }
.chart { width: 100%; height: auto; margin-bottom: 18px; }
.chart-text, .chart-price { font: 19px "DejaVu Sans Condensed", "DejaVu Sans", sans-serif; fill: #e6e6e6; }
.chart-price { fill: #000; }
.attach a { font-weight: 600; border-bottom: 1px solid #555; }
.thanks { margin-top: 18px; font-size: 11px; line-height: 15px; }
.post-foot { height: 54px; display: flex; align-items: center; gap: 18px; padding: 0 18px; border-top: 1px solid #ebebeb; font-size: 11px; line-height: 16px; }
.first .post-foot { height: 53px; }
.post-foot button { width: 16px; height: 16px; justify-content: start; }
.post-foot time { margin-left: auto; color: #b3b3b3; }
.to-top { position: absolute; right: 18px; bottom: 24px; width: 36px; height: 36px; border-radius: 50%; background: #475a63; box-shadow: 0 2px 5px rgba(0, 0, 0, .35); }

.scrollbar { width: 17px; display: flex; flex-direction: column; align-items: center; padding: 7px 0; background: #f0f0f0; }
.track { flex: 1; width: 13px; display: grid; grid-template-rows: 695fr 92fr 150fr; }
.thumb { grid-row: 2; background: #c1c1c1; }

/* Browser side pane */
.sidebar { width: 47px; display: flex; flex-direction: column; align-items: center; background: #6f34ad; border-left: 1px solid #9266c2; padding: 1px 0 2px; }
.sidebar button { width: 42px; height: 42px; }
.sidebar svg { fill: none; stroke: #e4daf0; stroke-width: 1.2; }
.sidebar .add { margin-top: 4px; }
.sidebar hr { width: 28px; border: 0; border-top: 1px solid #9266c2; margin: auto 0 2px; }

/* Taskbar */
.taskbar { flex: none; height: 48px; display: grid; grid-template-columns: 1fr auto 1fr; background: #ececec; border-top: 1px solid #dcdcdc; color: #1b1b1b; font-size: 12px; line-height: 16px; }
.weather { justify-self: start; padding-left: 20px; gap: 7px; text-align: left; font-size: 11px; }
.weather em { font-style: normal; color: #5d5d5d; }
.apps { display: flex; align-items: center; }
.apps button { width: 44px; height: 47px; position: relative; }
.run::after { content: ""; position: absolute; left: 19px; bottom: 4px; width: 6px; height: 3px; border-radius: 2px; background: #858585; }
.current::before { content: ""; position: absolute; inset: 4px 3px; border-radius: 4px; background: #f7f7f7; border: 1px solid #e4e4e4; }
.current svg { position: relative; }
.current::after { left: 14px; width: 16px; background: #0078d4; }
.tray { justify-self: end; display: flex; align-items: center; padding-right: 20px; }
.tray button { width: 24px; height: 32px; }
.tray .wide { margin-left: 4px; }
.tray svg { fill: none; stroke: #222; stroke-width: 1.2; }
.tray time { width: 62px; text-align: right; }
.badge { width: 16px; height: 16px; margin-left: 8px; border-radius: 50%; background: #0078d4; color: #fff; font-size: 11px; text-align: center; }
```
